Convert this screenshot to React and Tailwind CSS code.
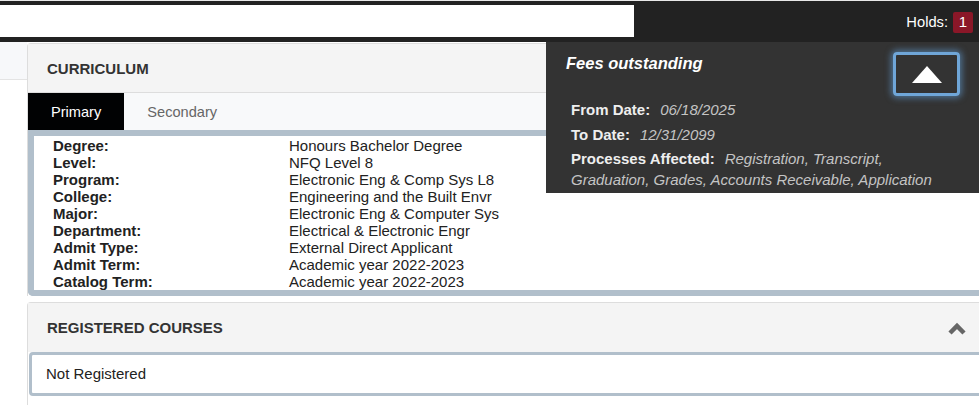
const curriculum = [
  ["Degree:", "Honours Bachelor Degree"],
  ["Level:", "NFQ Level 8"],
  ["Program:", "Electronic Eng & Comp Sys L8"],
  ["College:", "Engineering and the Built Envr"],
  ["Major:", "Electronic Eng & Computer Sys"],
  ["Department:", "Electrical & Electronic Engr"],
  ["Admit Type:", "External Direct Applicant"],
  ["Admit Term:", "Academic year 2022-2023"],
  ["Catalog Term:", "Academic year 2022-2023"],
];

const HoldPopover = () => (
  <div className="absolute left-[546px] top-[42px] w-[433px] h-[151px] bg-[#333333] z-10">
    <p className="pl-[20px] pt-[12px] text-[16.5px] leading-[19px] font-bold italic text-white">Fees outstanding</p>
    <button className="absolute left-[347px] top-[10px] w-[67px] h-[44px] rounded-[4px] border-[3px] border-[#6fa6d8] shadow-[0_0_6px_2px_rgba(102,165,225,0.55)] flex items-center justify-center">
      <svg width="30" height="17" viewBox="0 0 30 17">
        <polygon points="15,0 30,17 0,17" fill="#ffffff" />
      </svg>
    </button>
    <div className="pl-[25px] pt-[28px] text-[15px] w-[410px]">
      <p className="leading-[17px]">
        <span className="font-bold text-[#eeeeee] mr-[10px]">From Date:</span>
        <span className="italic text-[#c4c4c4]">06/18/2025</span>
      </p>
      <p className="leading-[17px] mt-[8px]">
        <span className="font-bold text-[#eeeeee] mr-[10px]">To Date:</span>
        <span className="italic text-[#c4c4c4]">12/31/2099</span>
      </p>
      <p className="leading-[21px] mt-[5px] w-[378px]">
        <span className="font-bold text-[#eeeeee] mr-[10px]">Processes Affected:</span>
        <span className="italic text-[#c4c4c4]">Registration, Transcript, Graduation, Grades, Accounts Receivable, Application</span>
      </p>
    </div>
  </div>
);

const App = () => {
  return (
    <div className="relative w-[979px] h-[405px] overflow-hidden bg-white [font-family:'Liberation_Sans',Arial,sans-serif] text-[#222222]">
      {/* Top bar */}
      <div className="h-[42px] bg-[#222222] border-t border-[#e8e8e8] flex items-start">
        <div className="mt-[4px] w-[634px] h-[32px] bg-white" />
        <div className="flex-1 flex items-center justify-end h-[41px] pr-[6px] gap-[5px] pt-[2px]">
          <span className="text-[14.7px] text-white">Holds:</span>
          <span className="w-[20px] h-[21px] rounded-[2px] bg-[#8a1728] text-white text-[15px] flex items-center justify-center">1</span>
        </div>
      </div>

      <div className="flex">
        {/* Left strip */}
        <div className="w-[27px] shrink-0">
          <div className="h-[38px] bg-[#f7f8fa] border-b border-[#e4e4e4]" />
        </div>

        <div className="flex-1 flex flex-col">
          {/* Curriculum card */}
          <div className="mt-[1px] border-l border-t border-[#dddddd] rounded-tl-[4px]">
            <div className="h-[49px] bg-[#f4f4f4] border-b border-[#dddddd] flex items-center pl-[19px] pt-[3px]">
              <h2 className="text-[15px] font-bold text-[#333333]">CURRICULUM</h2>
            </div>
            <div className="h-[37px] bg-[#f8f9fa] flex text-[14.6px]">
              <div className="bg-[#010203] text-white px-[23px] pt-[3px] flex items-center">Primary</div>
              <div className="text-[#666666] px-[23px] pt-[3px] flex items-center">Secondary</div>
            </div>
            <div className="border-[6px] border-r-0 border-[#b1bfcb] rounded-bl-[5px] bg-white pl-[19px] pt-[1px]">
              {curriculum.map(([label, value]) => (
                <div key={label} className="grid grid-cols-[236px_1fr] text-[15px] leading-[17px]">
                  <span className="font-bold text-[#222222]">{label}</span>
                  <span className="text-[#222222]">{value}</span>
                </div>
              ))}
            </div>
          </div>

          {/* Registered courses card */}
          <div className="mt-[6px] border-l border-t border-[#dddddd] rounded-tl-[4px] h-[110px]">
            <div className="h-[49px] bg-[#f4f4f4] flex items-center justify-between pl-[19px] pr-[12px] pt-[2px]">
              <h2 className="text-[15px] font-bold text-[#333333]">REGISTERED COURSES</h2>
              <svg width="20" height="14" viewBox="0 0 20 14">
                <polyline points="3,11 10,4 17,11" fill="none" stroke="#666666" strokeWidth="4.5" />
              </svg>
            </div>
            <div className="ml-[1px] border-[3px] border-r-0 border-[#b1bfcb] rounded-l-[4px] bg-white h-[44px] flex items-center pl-[14px] pt-[1px]">
              <span className="text-[15px] text-[#222222]">Not Registered</span>
            </div>
          </div>
        </div>
      </div>

      <HoldPopover />
    </div>
  );
};

export default App;
